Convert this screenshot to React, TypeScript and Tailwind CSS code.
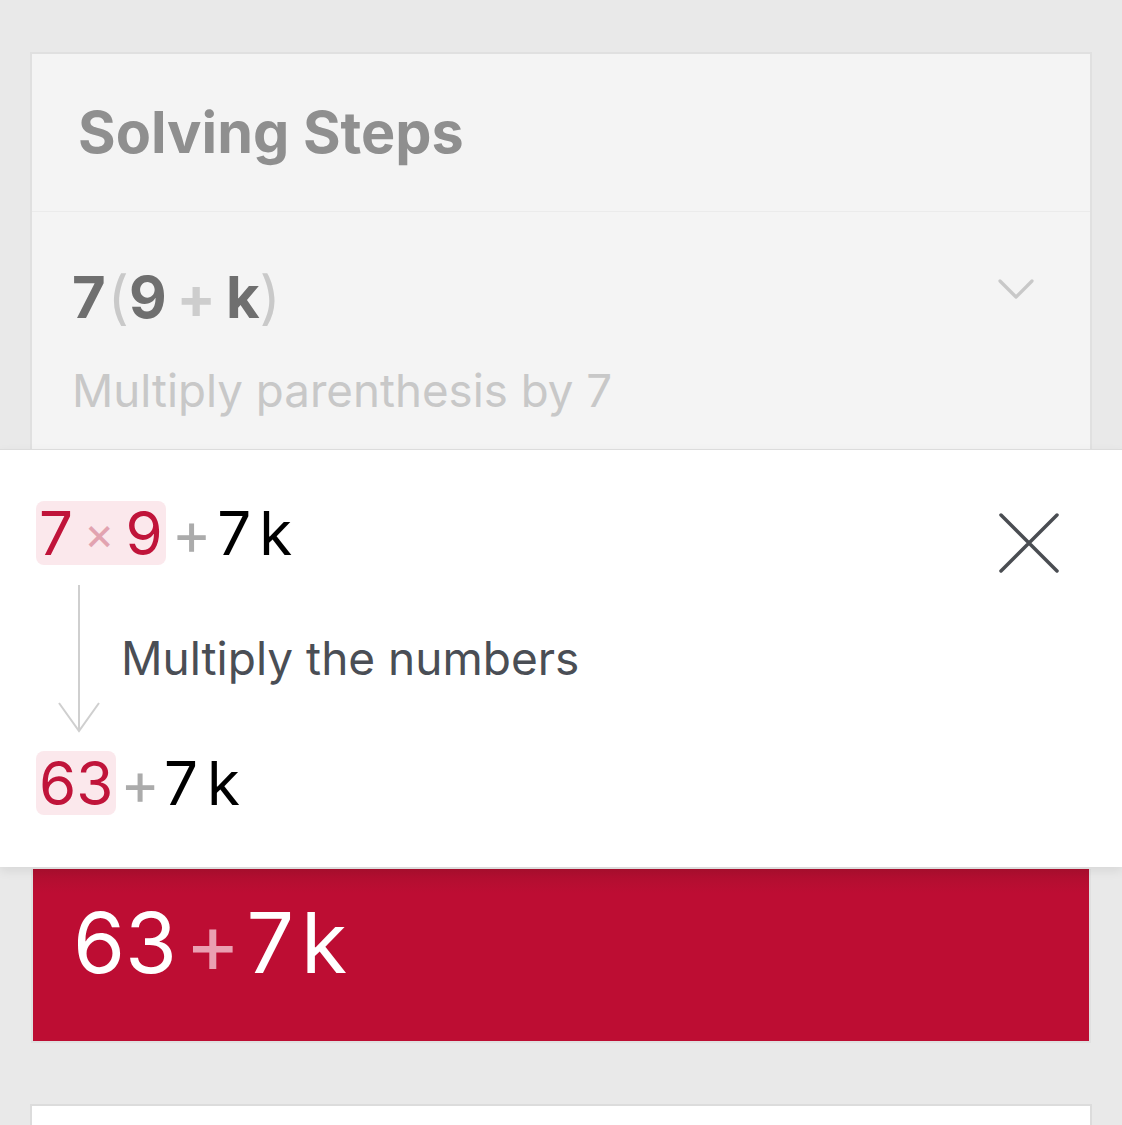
const font = { fontFamily: 'Inter, "Noto Sans", sans-serif' }

function Highlight({ children }: { children: React.ReactNode }) {
  return (
    <span className="inline-flex h-16 items-center gap-[11px] rounded-lg bg-[#fbe8ec] px-[3px] text-[#c0143a]">
      {children}
    </span>
  )
}

export default function App() {
  return (
    <div className="min-h-[1125px] overflow-hidden bg-[#e9e9e9] pt-[52px]" style={font}>
      {/* dimmed card behind the popover */}
      <div className="mx-[30px] border-2 border-b-0 border-[#e0e0e0] bg-[#f4f4f4]">
        <div className="flex h-[158px] items-center border-b border-[#ebebeb] pl-[46px]">
          <h1 className="text-[57.5px] font-bold text-[#8f8f8f]">Solving Steps</h1>
        </div>
        <div className="relative h-[237px] pl-[40px] pt-[52px]">
          <div className="flex h-[66px] items-center text-[58px] font-bold text-[#6f6f6f]">
            <span>7</span>
            <span className="ml-[2px] font-normal text-[#c9c9c9]">(</span>
            <span>9</span>
            <span className="mx-[10px] text-[#cdcdcd]">+</span>
            <span>k</span>
            <span className="font-normal text-[#c9c9c9]">)</span>
          </div>
          <p className="mt-[38px] text-[45.7px] leading-none text-[#c8c8c8]">Multiply parenthesis by 7</p>
          <svg className="absolute right-[56px] top-[65px]" width="36" height="24" viewBox="0 0 36 24">
            <path d="M2 4 L18 20 L34 4" fill="none" stroke="#c8c8c8" strokeWidth="3.2" strokeLinecap="round" strokeLinejoin="round" />
          </svg>
        </div>
      </div>

      {/* popover */}
      <div className="relative z-10 h-[418px] border-t border-[#dcdcdc] bg-white pl-[36px] pt-[51px] shadow-[0_4px_10px_rgba(0,0,0,0.08)]">
        <div className="flex items-center text-[60px] leading-none text-black">
          <Highlight>
            <span>7</span>
            <span className="text-[46px] text-[#e2a3b0]">×</span>
            <span>9</span>
          </Highlight>
          <span className="ml-[6px] text-[#ababab]">+</span>
          <span className="ml-[6px]">7</span>
          <span className="ml-[8px]">k</span>
        </div>
        <svg className="absolute right-[62px] top-[62px]" width="62" height="62" viewBox="0 0 62 62">
          <path d="M3 3 L59 59 M59 3 L3 59" fill="none" stroke="#4a4d52" strokeWidth="3.5" strokeLinecap="round" />
        </svg>
        <div className="flex h-[186px] items-stretch pt-[20px]">
          <div className="relative w-[85px]">
            <div className="absolute left-[42px] top-0 h-[146px] w-[2px] bg-[#cfcfcf]" />
            <svg className="absolute left-[22px] top-[116px]" width="42" height="32" viewBox="0 0 42 32">
              <path d="M1 2 L21 30 L41 2" fill="none" stroke="#cfcfcf" strokeWidth="2" />
            </svg>
          </div>
          <p className="pt-[50px] text-[46px] leading-none text-[#4a4e55]">Multiply the numbers</p>
        </div>
        <div className="flex items-center text-[60px] leading-none text-black">
          <Highlight>
            <span>63</span>
          </Highlight>
          <span className="ml-[4px] text-[#ababab]">+</span>
          <span className="ml-[4px]">7</span>
          <span className="ml-[9px]">k</span>
        </div>
      </div>

      <div className="mx-[31px] mt-[2px] border-2 border-t-0 border-[#e0e0e0]">
        <div className="flex h-[172px] items-center bg-[linear-gradient(#ad0f2f,#bd0d33_14%)] pb-[24px] pl-[40px] text-[84px] leading-none text-white">
          <span>63</span>
          <span className="ml-[8px] text-[#eaa0b2]">+</span>
          <span className="ml-[6px]">7</span>
          <span className="ml-[7px]">k</span>
        </div>
      </div>

      <div className="mx-[30px] mt-[61px] h-[40px] border-2 border-b-0 border-[#dcdcdc] bg-white" />
    </div>
  )
}
